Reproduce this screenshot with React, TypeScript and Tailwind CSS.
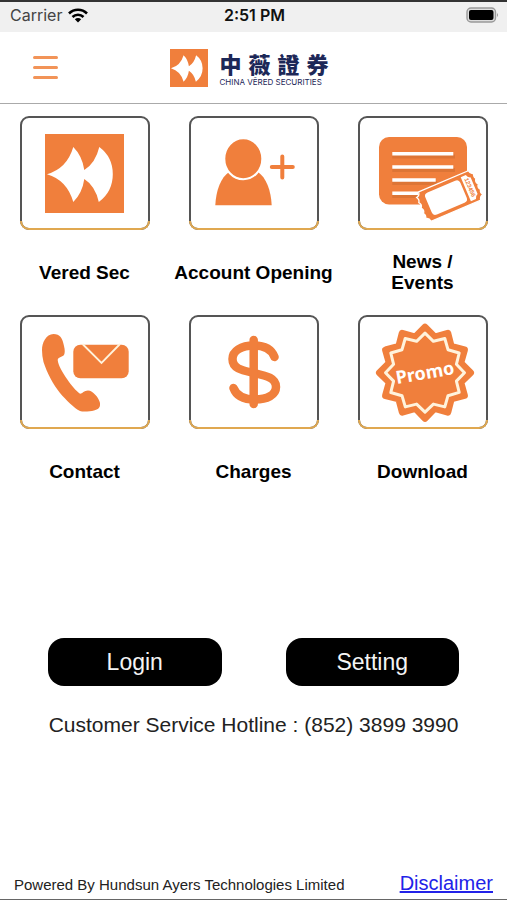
import React from 'react';

const ORANGE = '#f07f3c';

// White sails of the Vered logo on an orange square
const VeredMark: React.FC<{ className?: string }> = ({ className }) => (
  <svg viewBox="0 0 79 79" className={className} aria-hidden="true">
    <rect width="79" height="79" fill={ORANGE} />
    <path
      d="M2 40.2 Q22 34.5 28.3 13 Q37.3 22 39.3 36 Q50.5 29 54.3 13 Q67.8 23 67.8 40.2 Q67.8 57.500 53.8 68 Q50.3 52 39.3 45 Q37.3 59 28.3 68 Q22 46 2 40.2Z"
      fill="#fff"
    />
  </svg>
);

const VeredIcon = () => <VeredMark className="h-[79px] w-[79px]" />;

const AccountIcon = () => (
  <svg viewBox="2 2 126 110" className="h-full w-full" aria-hidden="true">
    <path d="M26.3 89.3 C27 74 32 61.5 40 56 L69 56 C77 61.5 82 74 82.7 89.3Z" fill={ORANGE} />
    <ellipse cx="54.3" cy="42.7" rx="19" ry="20.5" fill={ORANGE} stroke="#fff" strokeWidth="2" />
    <path d="M93.3 40.5V61.5M82.8 51H103.8" stroke={ORANGE} strokeWidth="4" strokeLinecap="round" />
  </svg>
);

const NewsIcon = () => (
  <svg viewBox="2 2 126 110" className="h-full w-full" aria-hidden="true">
    <rect x="21" y="21" width="88" height="67.5" rx="10" fill={ORANGE} />
    <path d="M34.3 40.5H97M34.3 54H97M34.3 67H79M34.3 80H60" stroke="#dd7536" strokeWidth="4" />
    <path d="M34.3 37.7H95.3M34.3 51H95.3M34.3 64H77.7M34.3 77.3H60" stroke="#fff" strokeWidth="3.4" />
    <g transform="translate(91.7 80) rotate(-23)">
      <path
        d="M-27 -16 H27 Q27.5 -12 31 -11.5 Q29 -8.5 31 -6 Q28.5 -3 31 0 Q28.5 3 31 6 Q29 8.5 31 11.5 Q27.5 12 27 16 H-27 Q-27.5 12 -31 11.5 Q-29 8.5 -31 6 Q-28.5 3 -31 0 Q-28.5 -3 -31 -6 Q-29 -8.5 -31 -11.5 Q-27.5 -12 -27 -16Z"
        fill={ORANGE}
        stroke="#fff"
        strokeWidth="1.3"
      />
      <rect x="-23" y="-12" width="38" height="24" rx="4" fill="#fff" />
      <path d="M17.500 -13H23Q23.500 -10 26.500 -9V9Q23.500 10 23 13H17.500Z" fill="#fff" />
      <text
        transform="translate(20 0) rotate(90)"
        textAnchor="middle"
        fontSize="6"
        fontWeight="700"
        fontFamily="Liberation Sans, sans-serif"
        fill={ORANGE}
      >
        123456
      </text>
    </g>
  </svg>
);

const ContactIcon = () => (
  <svg viewBox="2 2 126 110" className="h-full w-full" aria-hidden="true">
    <path
      d="M22 35 C22 28 26 19 33.5 19 C40 19 42.5 23 44 31 C45 35 45 38 44 40 C42 42 38 42 37.7 45 C38 50 43 58 47 64 C51 70 56 76 60 78.7 C62 79 64 75.5 68 75.5 C73 75.5 79 83 80 88 C80.5 93 78 94.5 74 95.5 C70 96.5 63 97 60 96 C54 93 46 85 40 78 C33 69 27 58 23.5 47 C22.5 43 22 39 22 35Z"
      fill={ORANGE}
    />
    <rect x="53.3" y="29.7" width="55.4" height="33.5" rx="7" fill={ORANGE} />
    <path d="M62.5 29 L81.5 48 L100 29" fill="none" stroke="#fff3dc" strokeWidth="1.8" />
  </svg>
);

const ChargesIcon = () => (
  <svg viewBox="2 2 126 110" className="h-full w-full" aria-hidden="true">
    <g fill="none" stroke={ORANGE} strokeWidth="8.5" strokeLinecap="round">
      <path d="M85.5 42 C82.5 34 75 30.5 65 30.5 C52 30.5 43.5 36 43.5 44 C43.5 54 54 55.5 65 58 C78 61 87 63 87 72 C87 80 78 84.5 66 84.5 C54 84.5 47 80 44.5 73" />
      <path d="M64.7 25V89" />
    </g>
  </svg>
);

// Points of a 12-pointed seal
const seal = (outer: number, inner: number) =>
  Array.from({ length: 24 }, (_, i) => {
    const r = i % 2 === 0 ? outer : inner;
    const a = (i * Math.PI) / 12;
    return `${(67 + r * Math.sin(a)).toFixed(1)},${(57.7 - r * Math.cos(a)).toFixed(1)}`;
  }).join(' ');

const PromoIcon = () => (
  <svg viewBox="2 2 126 110" className="h-full w-full" aria-hidden="true">
    <polygon points={seal(45.5, 37)} fill={ORANGE} stroke={ORANGE} strokeWidth="7" strokeLinejoin="round" />
    <polygon points={seal(39.5, 32.5)} fill="none" stroke="#fff3dc" strokeWidth="3" strokeLinejoin="round" />
    <text
      transform="translate(68 64) rotate(-10)"
      textAnchor="middle"
      fontSize="18"
      fontWeight="700"
      fontFamily="Noto Sans, sans-serif"
      fill="#fff"
    >
      Promo
    </text>
  </svg>
);

const menu = [
  { label: 'Vered Sec', icon: VeredIcon },
  { label: 'Account Opening', icon: AccountIcon },
  { label: 'News / Events', icon: NewsIcon },
  { label: 'Contact', icon: ContactIcon },
  { label: 'Charges', icon: ChargesIcon },
  { label: 'Download', icon: PromoIcon },
];

interface MenuTileProps {
  label: string;
  icon: React.FC;
}

const MenuTile: React.FC<MenuTileProps> = ({ label, icon: Icon }) => (
  <button type="button" className="flex flex-col items-center">
    <span className="relative flex h-[114px] w-[130px] items-center justify-center rounded-[9px] border-2 border-[#555]">
      <Icon />
      {/* gold bottom edge */}
      <span className="absolute -inset-x-0.5 -bottom-0.5 h-[9px] rounded-b-[9px] border-2 border-t-0 border-[#e0a850]" />
    </span>
    <span className="mt-5 flex h-11 items-center justify-center text-center text-[19px] leading-[21px] font-bold">
      <span className={label.includes('/') ? 'w-20' : 'whitespace-nowrap'}>{label}</span>
    </span>
  </button>
);

const StatusBar = () => (
  <div className="grid h-[30px] grid-cols-3 items-center bg-[#f0f0f0] pr-2 pb-1 pl-2.5 font-['Inter',sans-serif] text-base leading-5">
    <div className="flex items-center gap-1.5 text-[#444]">
      <span>Carrier</span>
      <svg viewBox="0 0 20 15" className="h-[15px] w-5" aria-hidden="true">
        <g fill="none" stroke="#000" strokeWidth="2.6">
          <path d="M1 5.5C6 .5 14 .5 19 5.5" />
          <path d="M4.5 9C7.5 6 12.5 6 15.5 9" />
        </g>
        <path d="M6.8 11.3C8.6 9.6 11.4 9.6 13.2 11.3L10 14.6Z" fill="#000" />
      </svg>
    </div>
    <span className="text-center font-semibold text-[#111]">2:51 PM</span>
    <svg viewBox="0 0 33 16" className="h-4 w-[33px] justify-self-end" aria-hidden="true">
      <rect x="1" y="1" width="28.5" height="14" rx="4" fill="#ddd" stroke="#999" strokeWidth="1.4" />
      <rect x="3" y="3" width="24.5" height="10" rx="2" fill="#000" />
      <path d="M31 6Q33 8 31 10Z" fill="#999" />
    </svg>
  </div>
);

const Header = () => (
  <header className="grid h-[72px] grid-cols-[1fr_auto_1fr] items-center border-b border-[#aaa] pr-[41px] pl-[33px]">
    <button type="button" aria-label="Menu" className="flex w-[25px] flex-col gap-[7px]">
      <span className="h-[3px] rounded-full bg-[#f29458]" />
      <span className="h-[3px] rounded-full bg-[#f29458]" />
      <span className="h-[3px] rounded-full bg-[#f29458]" />
    </button>
    <div className="flex items-center gap-[11px] text-[#1d2858]">
      <VeredMark className="h-[38px] w-[38px]" />
      <div>
        <div className="flex gap-[7px] font-['Noto_Sans_CJK_TC',sans-serif] text-[22px] leading-7 font-black">
          <span>中</span>
          <span>薇</span>
          <span>證</span>
          <span>券</span>
        </div>
        <div className="font-['Inter',sans-serif] text-[8px] leading-[10px] whitespace-nowrap">
          CHINA VĒRED SECURITIES
        </div>
      </div>
    </div>
  </header>
);

export default function App() {
  return (
    <div className="flex min-h-screen flex-col border-t-2 border-b border-t-[#333] border-b-[#666] bg-white font-['Liberation_Sans',Arial,sans-serif] text-black">
      <StatusBar />
      <Header />

      <main className="pt-3">
        <nav className="grid grid-cols-3 gap-y-[21px]">
          {menu.map((item) => (
            <MenuTile key={item.label} label={item.label} icon={item.icon} />
          ))}
        </nav>

        <div className="mt-[145px] grid grid-cols-2 gap-16 px-12 text-[23px] text-[#f4f4f4]">
          <button type="button" className="h-12 rounded-2xl bg-black">
            Login
          </button>
          <button type="button" className="h-12 rounded-2xl bg-black">
            Setting
          </button>
        </div>

        <p className="mt-6 text-center text-[21px] leading-[30px] text-[#222]">
          Customer Service Hotline : (852) 3899 3990
        </p>
      </main>

      <footer className="mt-auto flex items-end justify-between pr-3.5 pb-1 pl-3.5">
        <p className="text-[15px] leading-5 text-[#222]">Powered By Hundsun Ayers Technologies Limited</p>
        <a href="#disclaimer" className="text-[20px] leading-6 text-[#2222e8] underline">
          Disclaimer
        </a>
      </footer>
    </div>
  );
}
